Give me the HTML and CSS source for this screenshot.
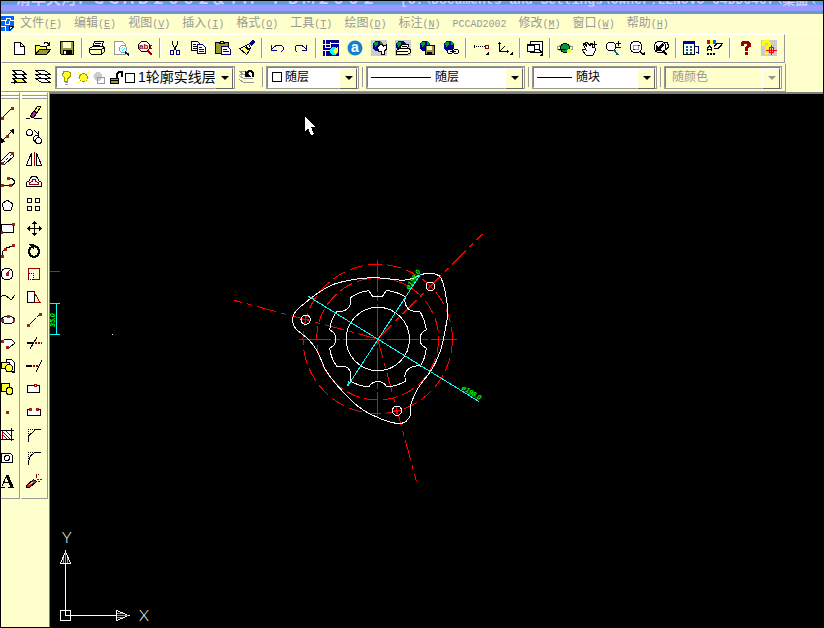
FILE: index.html
```html
<!DOCTYPE html>
<html lang="zh-CN">
<head>
<meta charset="utf-8">
<title>PCCAD2002</title>
<link rel="stylesheet" href="styles.css">
</head>
<body>
<header class="title"><span>清华天河ＰＣＣＡＤ２００２＆ＴＨ－ＰＤＭ２００２</span><span class="path">[C:\Documents and Settings\Owner.LENOVO-64DD6467\桌面\</span></header>
<nav class="menu">
<svg class="i app" viewBox="0 0 16 16"><path class="f-blue" d="M0 0h13v11l-4 4H0z"/><path class="s-white" d="M0 4.500h5v-2h4v2h4M0 10.500h5M4.500 5v4M8.500 5v4M5 8.500h4M4.500 11v4"/><path class="f-white s" d="M8.500 14.500v-4h4z"/></svg>
<a href="#">文件<span>(<u>F</u>)</span></a><a href="#">编辑<span>(<u>E</u>)</span></a><a href="#">视图<span>(<u>V</u>)</span></a><a href="#">插入<span>(<u>I</u>)</span></a><a href="#">格式<span>(<u>O</u>)</span></a><a href="#">工具<span>(<u>T</u>)</span></a><a href="#">绘图<span>(<u>D</u>)</span></a><a href="#">标注<span>(<u>N</u>)</span></a><a href="#"><span>PCCAD2002</span></a><a href="#">修改<span>(<u>M</u>)</span></a><a href="#">窗口<span>(<u>W</u>)</span></a><a href="#">帮助<span>(<u>H</u>)</span></a>
</nav>
<div class="bar standard" role="toolbar" aria-label="标准">
<button aria-label="新建"><svg class="i" viewBox="0 0 16 16"><path class="f-white s" d="M3.500 2.500h6l4 4v8h-10zM9.500 2.500v4h4"/></svg></button>
<button aria-label="打开"><svg class="i" viewBox="0 0 16 16"><path class="f-yellow s" d="M.5 14v-8.500h4l1 1h6v3"/><path class="f-olive s" d="M.5 14.500l4-5h11l-4 5z"/><path class="s" d="M9 3.500l1-1h2l2 2M14.500 2v3h-3"/></svg></button>
<button aria-label="保存"><svg class="i" viewBox="0 0 16 16"><path class="f-olive s" d="M1.500 1.500h13v13h-12l-1-1z"/><path class="f-cream" d="M4 2h8v6H4z"/><path class="f-black" d="M4 10h9v4H4z"/><path class="f-cream" d="M5 11h2v3H5z"/></svg></button>
<i class="sep"></i>
<button aria-label="打印"><svg class="i" viewBox="0 0 16 16"><path class="f-white s" d="M3.500 7.500l2-6h9l-2 6M6 3.500h6M5 5.500h6"/><path class="f-cream s" d="M.5 8.500l3-2h10l2 1v4l-3 3h-10l-2-2zM.5 9.500h12l3-2M12.500 9v5"/><path class="s-yellow" d="M8 12.500h2"/></svg></button>
<button aria-label="打印预览"><svg class="i" viewBox="0 0 16 16"><path class="f-white s-gray" d="M1.500 14.500v-13h8l3 3v10z"/><circle class="f-white s-gray" cx="10" cy="9" r="3.500"/><path class="s-cyan" d="M8 9l2-2M9 11l3-3"/><path class="s-navy thick" d="M12 12l4 3"/></svg></button>
<button aria-label="查找"><svg class="i" viewBox="0 0 16 16"><circle class="f-white s" cx="7" cy="6.500" r="5.500"/><text class="abc" x="2" y="9">ab</text><path class="s-red" d="M15 5h-2v3h2"/><path class="s-red thick" d="M11 11l4 4"/></svg></button>
<i class="sep"></i>
<button aria-label="剪切"><svg class="i" viewBox="0 0 16 16"><path class="s" d="M5.500 1v3l4 7M10.500 1v3l-4 7"/><path class="s-blue" d="M3.500 10.500h3v4h-3zM9.500 10.500h3v4h-3z"/></svg></button>
<button aria-label="复制"><svg class="i" viewBox="0 0 16 16"><path class="f-white s" d="M.5 1.500h6l2 2v7h-8z"/><path class="s" d="M2 4.500h3M2 6.500h4M2 8.500h4"/><path class="f-white s-blue" d="M6.500 4.500h5l3 3v6h-8z"/><path class="s-blue" d="M8 7.500h3M8 9.500h5M8 11.500h5"/></svg></button>
<button aria-label="粘贴"><svg class="i" viewBox="0 0 16 16"><path class="f-olive s" d="M.5 2.500h13v11H.5z"/><path class="f-yellow s" d="M4.500 3.500l1-2h3l1 2z"/><path class="f-white s-blue" d="M6.500 6.500h6l3 3v5h-9z"/><path class="s-blue" d="M8 9.500h4M8 11.500h6"/></svg></button>
<button aria-label="特性匹配"><svg class="i" viewBox="0 0 16 16"><path class="f-cream s" d="M.5 8.500l5-2 5 4-3 4z"/><path class="s-yellow" d="M3 9l4 4M5 8l4 4"/><path class="f-white s" d="M6.500 5.500l3-1 2 3-1 2z"/><path class="s-blue fat" d="M11 5l4-4"/></svg></button>
<i class="sep"></i>
<button aria-label="放弃"><svg class="i" viewBox="0 0 16 16"><path class="s-blue" d="M2.500 5v5h5M3 9l2-2 3-2h4l2 2v3l-2 2"/></svg></button>
<button aria-label="重做"><svg class="i" viewBox="0 0 16 16"><path class="s-blue" d="M13.500 5v5h-5M13 9l-2-2-3-2H4L2 7v3l2 2"/></svg></button>
<i class="sep"></i>
<button aria-label="今日"><svg class="i" viewBox="0 0 16 16"><path class="f-navy" d="M0 0h16v16H0z"/><path class="s-white" d="M0 4.500h7M2.500 0v8M2 7.500h5v-6M7 3.500h9M2.500 10v6M0 10.500h7"/><circle class="f-cyan" cx="11" cy="11" r="4"/><path class="f-yellow" d="M10 10l5-3v4l-3 3z"/></svg></button>
<button aria-label="Autodesk"><svg class="i smooth" viewBox="0 0 16 16"><circle class="f-sky" cx="8" cy="8" r="7.500"/><text class="logo-a" x="4" y="12">a</text></svg></button>
<button aria-label="网上会议"><svg class="i" viewBox="0 0 16 16"><path class="f-silver" d="M0 0h16v16H0z"/><circle class="f-navy" cx="7" cy="6" r="5.500"/><path class="f-green" d="M3 2h4v3L4 7zM9 1l3 3-3 1z"/><path class="f-white s" d="M6.500 7.500l3-3h2l1 2 3-2v5l-2 1v4h-3v-3h-3z"/></svg></button>
<button aria-label="发布"><svg class="i" viewBox="0 0 16 16"><path class="f-silver" d="M0 0h16v16H0z"/><circle class="f-navy" cx="6" cy="5.500" r="5"/><path class="f-green" d="M2 2h4v3L3 7z"/><path class="f-white s" d="M4.500 9.500l2-5h7l-1 5M7 6.500h5"/><path class="f-cream s" d="M1.500 10.500l3-2h9l2 1v3l-3 2h-11zM2 11.500h11"/></svg></button>
<button aria-label="电子传递"><svg class="i" viewBox="0 0 16 16"><circle class="f-navy" cx="6" cy="6" r="5.500"/><path class="f-green" d="M2 2h4v3L3 7zM8 1l3 3-3 1z"/><path class="f-olive s" d="M6.500 5.500h9v9h-9z"/><path class="f-cream" d="M8 6h5v4H8z"/><path class="f-black" d="M8 12h5v3H8z"/></svg></button>
<button aria-label="超级链接"><svg class="i" viewBox="0 0 16 16"><circle class="f-navy" cx="6" cy="6" r="5.500"/><path class="f-green" d="M2 2h4v3L3 7zM8 1l3 3-3 1z"/><path class="f-white s" d="M4.500 10.500l1-1h3l1 1v2l-1 1h-3l-1-1zM10.500 10.500l1-1h3l1 1v2l-1 1h-3l-1-1z"/><path class="s" d="M7 11.500h6"/></svg></button>
<i class="sep"></i>
<button aria-label="临时追踪点"><svg class="i" viewBox="0 0 16 16"><path class="s dots" d="M1 6.500h11"/><path class="s" d="M1.500 5v3"/><path class="s-red" d="M12.500 5.500h3v3h-3z"/><path class="f-black" d="M12 15h4v-4z"/></svg></button>
<button aria-label="用户坐标系"><svg class="i" viewBox="0 0 16 16"><path class="s" d="M2.500 2v9.500h9M3 11l5-5M1 3.500h3M10.500 10v3"/><path class="f-black" d="M12 15h4v-4z"/></svg></button>
<i class="sep"></i>
<button aria-label="鸟瞰"><svg class="i" viewBox="0 0 16 16"><path class="f-white s" d="M3.500 12.500v-11h12v11z"/><path class="f-white s" d="M.5 4.500h7v7h-7zM.5 5.500h7"/><circle class="f-white s" cx="10" cy="7" r="3"/><path class="s" d="M12 9l3 4"/><path class="f-black" d="M12 16h4v-4z"/></svg></button>
<i class="sep"></i>
<button aria-label="三维动态观察"><svg class="i" viewBox="0 0 16 16"><ellipse class="s-gray" cx="8" cy="8" rx="7.500" ry="3"/><circle class="f-green s" cx="8" cy="8" r="4.500"/><path class="s" d="M1 9.500h8"/><circle class="f-yellow" cx="12" cy="11" r="2"/></svg></button>
<button aria-label="实时平移"><svg class="i" viewBox="0 0 16 16"><path class="f-white s" d="M5 15l-4-5 1-1 3 1-3-6 1-1 3 4-2-5h2l3 4 1-3h1v4l3 1v3l-2 4z"/><path class="s" d="M10 4.500h6M13.500 1v6"/></svg></button>
<button aria-label="实时缩放"><svg class="i" viewBox="0 0 16 16"><circle class="f-white s" cx="6" cy="6.500" r="4.500"/><path class="s-teal thick" d="M9 10l4 5"/><path class="s" d="M11 3.500h5M13.500 1v5M11 7.500h5"/></svg></button>
<button aria-label="窗口缩放"><svg class="i" viewBox="0 0 16 16"><circle class="f-white s" cx="7" cy="7" r="6"/><path class="s-gray" d="M4.500 5.500h5v4h-5z"/><path class="s-red" d="M4 9.500h2M9 5.500h2"/><path class="s" d="M11 11l3 4"/><path class="f-black" d="M12 15h4v-4z"/></svg></button>
<button aria-label="缩放上一个"><svg class="i" viewBox="0 0 16 16"><circle class="f-white s" cx="7" cy="7" r="6"/><path class="f-black" d="M3 11V5l2 2 5-4 1 2-4 4 2 2z"/><path class="s thick" d="M10 11l4 4"/><path class="s" d="M12 2.500h2l1 2v3l-2 2"/></svg></button>
<i class="sep"></i>
<button aria-label="特性"><svg class="i" viewBox="0 0 16 16"><path class="f-white s" d="M.5 1.500h11v13H.5z"/><path class="f-navy" d="M0 1h12v3H0z"/><path class="s-teal cols" d="M4 6v8M8 6v8"/><path class="s-blue" d="M12 6.500h3v7M13 12.500h3"/></svg></button>
<button aria-label="设计中心"><svg class="i" viewBox="0 0 16 16"><path class="f-red" d="M0 0h3v4H0z"/><path class="f-yellow" d="M3 0h3v4H3z"/><path class="f-blue" d="M6 0h3v4H6z"/><path class="s" d="M.5 11V8l2-2 2 2v3M1 9.500h4"/><path class="s thick dash" d="M0 14h9"/><path class="f-white s" d="M7 6.500l3-3h6M7 8.500h4l4-4"/></svg></button>
<i class="sep"></i>
<button aria-label="帮助"><svg class="i" viewBox="0 0 16 16"><path class="s-red fat" d="M5 6V3l2-1h3l2 2v2L9 8v3M9 12v3"/></svg></button>
<button aria-label="活动助手"><svg class="i" viewBox="0 0 16 16"><path class="f-silver" d="M0 0h16v16H0z"/><path class="s-yellow fat" d="M2 6V3l2-2h3l1 2v3L5 9v2M5 12v3"/><path class="s-bright" d="M8.500 7.500h4v5h-4zM10.500 5v10M5 10.500h11"/></svg></button>
</div>
<div class="bar properties" role="toolbar" aria-label="对象特性">
<button aria-label="设为当前层"><svg class="i" viewBox="0 0 16 16"><path class="f-yellow s" d="M1.500 9.500h9l5 4h-9z"/><path class="f-white s" d="M1.500 5.500h9l5 4h-9zM1.500 1.500h9l5 4h-9z"/><path class="s" d="M0 13.500h6M3 11v4"/></svg></button>
<button aria-label="图层"><svg class="i" viewBox="0 0 16 16"><path class="f-white s" d="M.5 9.500h9l6 4h-9zM.5 5.500h9l6 4h-9zM.5 1.500h9l6 4h-9z"/></svg></button>
<label class="combo layer"><select aria-label="图层"><option>1轮廓实线层</option></select>
<svg class="state" viewBox="0 0 76 16"><path class="f-yellow s-olive" d="M3.500 8l-2-3 1-3 2-1h2l3 2v3l-3 3v2h-3z"/><path class="s-gray" d="M4 12.500h3M4 14.500h3"/><path class="s-yellow" d="M17 2l11 11M28 2L17 13M22.500 1v13M16 7.500h13"/><circle class="f-yellow s-olive" cx="22.500" cy="7.500" r="4"/><circle class="f-silver" cx="37" cy="6.500" r="4.500"/><path class="s-gray" d="M36.500 7.500h7v6h-7z"/><path class="f-olive s" d="M49.500 8.500h8v5h-8zM50 10.500h8"/><path class="s thick" d="M56 9V4l2-2h3v5"/><path class="f-white s" d="M64.500 3.500h9v9h-9z"/></svg></label>
<button aria-label="上一个图层"><svg class="i" viewBox="0 0 16 16"><path class="s-gray" d="M.5 2.500h7l3 3M.5 5.500h5M.5 6.500l4 3h9M.5 10.500l4 3h10M.5 2.500l4 3"/><path class="s thick" d="M14 8V4l-2-2h-2L8 4"/><path class="f-black" d="M6 2v6h6z"/></svg></button>
<i class="sep"></i>
<label class="combo color"><select aria-label="颜色"><option>随层</option></select><i class="swatch"></i></label>
<i class="sep"></i>
<label class="combo linetype"><select aria-label="线型"><option>随层</option></select><i class="rule"></i></label>
<i class="sep"></i>
<label class="combo weight"><select aria-label="线宽"><option>随块</option></select><i class="rule"></i></label>
<i class="sep"></i>
<label class="combo style"><select aria-label="打印样式" disabled><option>随颜色</option></select></label>
</div>
<main>
<aside class="tools draw" role="toolbar" aria-label="绘图">
<button aria-label="直线"><svg class="i" viewBox="0 0 16 16"><path class="s" d="M3 13L13 3"/><path class="f-red" d="M2 12h3v3H2zM12 2h3v3h-3z"/></svg></button>
<button aria-label="构造线"><svg class="i" viewBox="0 0 16 16"><path class="s" d="M2 14L14 2"/><path class="f-black" d="M15 1v5l-5-4zM2 15v-5l4 4z"/><path class="f-red" d="M7 7h3v3H7z"/></svg></button>
<button aria-label="多线"><svg class="i" viewBox="0 0 16 16"><path class="f-white s" d="M1 11L11 1l4 4L5 14z"/><path class="s dots" d="M4 12l9-9"/><path class="f-red" d="M2 11h3v3H2zM12 1h3v3h-3z"/></svg></button>
<button aria-label="多段线"><svg class="i" viewBox="0 0 16 16"><path class="s" d="M2 11.500h11l2-2v-3l-2-2H9"/><path class="f-red" d="M2 10h3v3H2zM10 10h3v3h-3zM8 3h3v3H8z"/></svg></button>
<button aria-label="正多边形"><svg class="i" viewBox="0 0 16 16"><path class="f-white s" d="M3 7l5-4 6 4-2 6H5z"/></svg></button>
<button aria-label="矩形"><svg class="i" viewBox="0 0 16 16"><path class="f-white s" d="M2.500 4.500h12v8h-12z"/><path class="f-red" d="M13 3h3v3h-3zM1 11h3v3H1z"/></svg></button>
<button aria-label="圆弧"><svg class="i" viewBox="0 0 16 16"><path class="s" d="M3 14V9l4-4 7-2"/><path class="f-red" d="M2 12h3v3H2zM5 5h3v3H5zM13 1h3v3h-3z"/></svg></button>
<button aria-label="圆"><svg class="i" viewBox="0 0 16 16"><circle class="f-white s" cx="8" cy="8" r="6"/><path class="s-red" d="M8 8l3-4"/><path class="f-red" d="M7 7h3v3H7z"/></svg></button>
<button aria-label="样条曲线"><svg class="i" viewBox="0 0 16 16"><path class="s" d="M1 9l3-3h2l5 4h2l3-4"/></svg></button>
<button aria-label="椭圆"><svg class="i" viewBox="0 0 16 16"><ellipse class="f-white s" cx="9" cy="8" rx="6.500" ry="4"/><path class="f-red" d="M8 3h3v3H8zM2 7h3v3H2zM14 7h2v3h-2z"/></svg></button>
<button aria-label="椭圆弧"><svg class="i" viewBox="0 0 16 16"><path class="f-white s" d="M3 6l4-2h5l3 3v2l-4 3H8"/><path class="f-red" d="M2 5h3v3H2zM7 11h3v3H7z"/></svg></button>
<button aria-label="插入块"><svg class="i" viewBox="0 0 16 16"><path class="f-white s" d="M7.500 1.500h5l3 3v9h-8z"/><path class="f-yellow s" d="M2.500 4.500h8v6h-8z"/><circle class="f-yellow s" cx="10" cy="10" r="3.500"/><path class="f-black" d="M12 15h4v-4z"/></svg></button>
<button aria-label="创建块"><svg class="i" viewBox="0 0 16 16"><path class="f-yellow s" d="M2.500 2.500h8v8h-8z"/><circle class="f-yellow s" cx="10.500" cy="10" r="3.500"/></svg></button>
<button aria-label="点"><svg class="i" viewBox="0 0 16 16"><path class="f-red" d="M7 7h3v3H7z"/></svg></button>
<button aria-label="图案填充"><svg class="i" viewBox="0 0 16 16"><path class="f-white s-red" d="M3.500 3.500h9v9h-9zM3 7l5 5M3 4l9 9M7 4l5 5"/><path class="s" d="M1 3.500h14M12.500 1v13M1 12.500h14"/></svg></button>
<button aria-label="面域"><svg class="i" viewBox="0 0 16 16"><path class="f-white s" d="M2.500 3.500h9l2 2v7h-11z"/><circle class="f-white s" cx="8" cy="8" r="2.500"/></svg></button>
<button aria-label="多行文字"><svg class="i" viewBox="0 0 16 16"><path class="s" d="M3 13L8 2M2 14.500h4M9 14.500h6M5 9.500h6"/><path class="s fat" d="M8 2l5 12"/></svg></button>
</aside>
<aside class="tools modify" role="toolbar" aria-label="修改">
<button aria-label="删除"><svg class="i" viewBox="0 0 16 16"><path class="f-purple s" d="M4 11l4-5 3 2-4 5z"/><path class="f-yellow s" d="M8 6l4-5h3l-4 7z"/><path class="s" d="M0 13.500h4M8 13.500h8"/></svg></button>
<button aria-label="复制对象"><svg class="i" viewBox="0 0 16 16"><circle class="f-white s" cx="3.500" cy="4.500" r="3"/><circle class="f-white s" cx="10.500" cy="10.500" r="3"/><circle class="f-white s" cx="12.500" cy="12.500" r="3"/><path class="s" d="M8 2l4 4M12.500 3v4h-4"/></svg></button>
<button aria-label="镜像"><svg class="i" viewBox="0 0 16 16"><path class="f-white s" d="M5.500 2v12h-5zM10.500 2v12h5z"/><path class="s-red" d="M8.500 1v14"/></svg></button>
<button aria-label="偏移"><svg class="i" viewBox="0 0 16 16"><path class="f-white s" d="M.5 12.500v-4l3-2 1-3 2-1h3l2 1 1 3 3 2v4z"/><path class="s-red" d="M3.500 10.500v-2l3-1v-2h3v2l3 1v2z"/></svg></button>
<button aria-label="阵列"><svg class="i" viewBox="0 0 16 16"><path class="f-white s" d="M1.500 1.500h4v4h-4zM9.500 1.500h4v4h-4zM1.500 9.500h4v4h-4zM9.500 9.500h4v4h-4z"/></svg></button>
<button aria-label="移动"><svg class="i" viewBox="0 0 16 16"><path class="s" d="M8.500 2v12M2 8.500h12"/><path class="f-black" d="M6 4l2-3h1l2 3zM6 13l2 3h1l2-3zM4 6L1 8v1l3 2zM13 6l3 2v1l-3 2z"/></svg></button>
<button aria-label="旋转"><svg class="i" viewBox="0 0 16 16"><path class="s thick" d="M5 4L3 7v3l2 3 3 1 3-1 2-3V7l-2-3-3-1"/><path class="f-black" d="M3 1h5v6z"/></svg></button>
<button aria-label="缩放"><svg class="i" viewBox="0 0 16 16"><path class="f-cream s-red" d="M2.500 2.500h11v11h-11z"/><path class="f-white s dots" d="M2.500 7.500h5v6h-5z"/></svg></button>
<button aria-label="拉伸"><svg class="i" viewBox="0 0 16 16"><path class="f-white s" d="M1.500 13.500v-11h7v11z"/><path class="s-red" d="M8 3l6 10.500H8"/></svg></button>
<button aria-label="拉长"><svg class="i" viewBox="0 0 16 16"><path class="s" d="M2 14l6-6"/><path class="s dots" d="M8 8l5-5"/><path class="f-red" d="M1 12h3v3H1zM13 1h3v3h-3z"/></svg></button>
<button aria-label="修剪"><svg class="i" viewBox="0 0 16 16"><path class="s" d="M4 14l7-12"/><path class="s thick" d="M1 8h7"/><path class="s-red thick dash" d="M9 8h7"/></svg></button>
<button aria-label="延伸"><svg class="i" viewBox="0 0 16 16"><path class="s" d="M10 14l6-12"/><path class="s thick" d="M0 8h6"/><path class="s-red thick dash" d="M7 8h6"/></svg></button>
<button aria-label="打断于点"><svg class="i" viewBox="0 0 16 16"><path class="f-white s" d="M1.500 4.500h12v7h-12z"/><path class="f-white s-red" d="M8.500 3.500h2v2h-2z"/></svg></button>
<button aria-label="打断"><svg class="i" viewBox="0 0 16 16"><path class="f-white" d="M1 5h14v7H1z"/><path class="s" d="M4 5.500H1.500v6h13v-6H12"/><path class="f-red" d="M3 4h3v3H3zM10 4h3v3h-3z"/></svg></button>
<button aria-label="倒角"><svg class="i" viewBox="0 0 16 16"><path class="s" d="M2.500 15V9l7-6.500H15"/><path class="s dots" d="M2.500 9V2.500h7"/></svg></button>
<button aria-label="圆角"><svg class="i" viewBox="0 0 16 16"><path class="s" d="M2.500 15v-4l2-5 4-3.500H15"/><path class="s dots" d="M2.500 9V2.500h7"/></svg></button>
<button aria-label="分解"><svg class="i" viewBox="0 0 16 16"><path class="f-crimson s" d="M.5 12.500l7-6 3 2-7 6h-3z"/><path class="s-silver" d="M3 12l4-3"/><path class="s-red dash" d="M10 5l3-4M11 6h5M10 3V0M12 8l3 2"/></svg></button>
</aside>
<section class="canvas" aria-label="绘图区">
<svg class="drawing">
<g transform="translate(-50 -94)">
<g class="cyan"><path d="M50 303.500h10M50 334.500h10M56.500 303v31"/></g>
<path class="center" d="M50 271.500h10"/>
<path class="f-white" d="M112 334h1v1h-1z"/>
<g transform="translate(220 220) scale(.33333)">
<g class="center">
<circle class="dashed" cx="473" cy="357" r="224"/><circle class="dashed" cx="473" cy="357" r="183"/>
<path class="dashdot" d="M473 357L42 241M473 357L788 42M473 357L589 783"/>
<path class="axis" d="M237 358.500h474M472.500 120v472"/>
<path d="M247 299h20M257 289v20M622 190l18 18M640 190l-18 18M522 572h20M531 562v20"/>
</g>
<g class="object">
<circle cx="473.500" cy="357" r="95"/><circle cx="257" cy="299" r="14"/><circle cx="631" cy="199" r="13"/><circle cx="531" cy="572" r="14"/>
<path d="M446 212l12 17h29l13-18Q530 215 556 230Q550 252 566 268Q575 275 600 275Q615 300 619 330Q600 337 600 357Q600 377 619 384Q616 415 601 438Q572 435 558 455Q552 463 557 484Q530 498 501 501Q492 485 473 485Q455 485 446 501Q418 498 391 484Q396 455 384 444Q374 437 350 439Q332 412 329 384Q347 377 347 357Q347 337 329 330Q332 300 350 275Q376 276 386 262Q394 252 391 233Q415 216 446 212z"/>
<path d="M218 298Q218 278 245 257Q300 210 340 193Q400 173 472 173L545 181Q575 180 601 165Q630 153 658 167Q670 180 678 230Q685 270 683 290L670 360Q658 415 630 457L600 495Q578 530 571 560V585Q563 608 540 611Q512 610 472 592Q430 575 400 547Q345 495 315 447L296 402Q283 375 260 353L232 331Q218 318 218 298z"/>
</g>
<g class="cyan"><path d="M265 229L776 544M601 163L383 498M265 229l16 6M383 498l3-14"/></g>
</g>
<text class="dim" transform="translate(461 389) rotate(31)">ø198.0</text>
<text class="dim" transform="translate(409 290) rotate(-57)">ø158.0</text>
<text class="dim" transform="translate(55 327) rotate(-90)">35.0</text>
<g class="object"><path d="M60.500 610.500h10v10h-10zM65.500 615.500v-52M65.500 615.500h51M60.500 563.500h10l-5-12zM116.500 610.500v10l12-5z"/></g>
<path class="s-gray" d="M65.500 553v10M63.500 558v5M67.500 558v5M117 613.500h6M117 615.500h11M117 617.500h6"/>
<text class="ucs" x="62" y="543">Y</text><text class="ucs" x="139" y="621">X</text>
<path class="f-white" d="M305 116v15l3-3 3 7 3-1-3-7h4z"/>
</g>
</svg>
</section>
</main>
</body>
</html>
```
FILE: styles.css
```css
* { box-sizing: border-box; }
html, body { height: 100%; }
body {
  margin: 0;
  border: 1px solid #000;
  display: flex;
  flex-direction: column;
  overflow: hidden;
  background: #ffffcc;
  font: 12px/16px "Liberation Sans", "Noto Sans CJK SC", sans-serif;
}
.title {
  height: 13px;
  flex: none;
  display: flex;
  align-items: flex-end;
  gap: 24px;
  padding: 0 0 5px 15px;
  overflow: hidden;
  white-space: nowrap;
  color: #ccccff;
  background: linear-gradient(#6699cc 3px, #6699ff 3px 4px, #9999ff 4px 10px, #6699cc 10px);
  font: bold 15px/16px "Liberation Mono", "Noto Sans CJK SC", monospace;
}
.title .path { font-size: 13px; }
.menu {
  height: 20px;
  flex: none;
  display: flex;
  align-items: center;
  gap: 12px;
  border-bottom: 1px solid #fff;
  white-space: nowrap;
}
.menu .app { margin-right: -9px; }
.menu a { color: #999; text-decoration: none; }
.menu span { font: 10px/16px "Liberation Mono", monospace; }
.bar {
  height: 29px;
  flex: none;
  align-self: flex-start;
  display: flex;
  align-items: flex-start;
  padding: 1px 3px 0 5px;
  border: 1px solid;
  border-color: #fff #999 #999 #fff;
}
button {
  display: flex;
  align-items: center;
  justify-content: center;
  padding: 0;
  border: 0;
  background: none;
}
.bar button { width: 24px; height: 24px; }
.sep {
  width: 2px;
  height: 20px;
  margin: 2px 2px 0;
  background: linear-gradient(90deg, #999 1px, #fff 1px);
}
.properties .sep { margin: 2px 2px 0 3px; }
.i { width: 16px; height: 16px; flex: none; }
svg { shape-rendering: crispEdges; fill: none; }
.smooth { shape-rendering: auto; }
.combo {
  position: relative;
  height: 23px;
  margin-top: 1px;
  border: 2px solid;
  border-color: #808080 #fff #fff #808080;
  outline: 1px solid #999;
  outline-offset: -1px;
  background: #fff;
}
.combo select {
  appearance: none;
  width: 100%;
  height: 19px;
  padding: 0 16px 0 0;
  border: 0;
  background: none;
  color: #000;
  opacity: 1;
  font: 12px/19px "Liberation Sans", "Noto Sans CJK SC", sans-serif;
}
.combo::before {
  content: "";
  position: absolute;
  right: 0;
  top: 0;
  width: 16px;
  height: 19px;
  background: #ffffcc;
  border: 1px solid;
  border-color: #fff #666 #666 #fff;
}
.combo::after {
  content: "";
  position: absolute;
  right: 4px;
  top: 8px;
  border: 4px solid transparent;
  border-top-color: #000;
  border-bottom: 0;
}
.layer { width: 180px; }
.layer select { padding-left: 81px; font-size: 14px; }
.state { position: absolute; left: 4px; top: 2px; width: 76px; height: 16px; pointer-events: none; }
.color { width: 93px; }
.color select { padding-left: 17px; }
.swatch { position: absolute; left: 4px; top: 4px; width: 10px; height: 10px; border: 1px solid #000; }
.linetype { width: 159px; }
.linetype select { padding-left: 67px; }
.rule { position: absolute; left: 3px; top: 9px; width: 60px; height: 1px; background: #000; }
.weight { width: 125px; }
.weight select { padding-left: 42px; }
.weight .rule { width: 35px; }
.style { width: 118px; background: #ffffcc; }
.style select { padding-left: 6px; color: #999; }
.style::after { border-top-color: #999; }
main { flex: 1; display: flex; min-height: 0; }
.tools {
  align-self: flex-start;
  padding: 9px 0 5px;
  border: 1px solid;
  border-color: #fff #999 #999 #fff;
  background: linear-gradient(#fff 1px, #ffffcc 1px 2px, #999 2px 3px, #fff 3px 4px, #ffffcc 4px 5px, #999 5px 6px, #ffffcc 6px) no-repeat;
}
.tools button { width: 100%; height: 23px; padding-bottom: 1px; }
.draw { width: 19px; border-left: 0; overflow: hidden; }
.draw button { justify-content: flex-start; }
.draw .i { margin-left: -2px; }
.modify { width: 27px; margin-left: 1px; padding-right: 1px; }
.canvas {
  flex: 1;
  min-width: 0;
  margin-left: 1px;
  border-left: 1px solid #808080;
  border-top: 2px solid #808080;
  background: #000;
}
.drawing { display: block; width: 100%; height: 100%; }
.s { stroke: #000; }
.s-white { stroke: #fff; }
.s-gray { stroke: #999; }
.s-silver { stroke: #ccc; }
.s-red { stroke: #990000; }
.s-bright { stroke: #ff0000; }
.s-blue, .s-navy { stroke: #000080; }
.s-yellow { stroke: #ffff00; }
.s-olive { stroke: #999900; }
.s-cyan { stroke: #00ffff; }
.s-teal { stroke: #006666; }
.f-white { fill: #fff; }
.f-black { fill: #000; }
.f-cream { fill: #ffffcc; }
.f-silver { fill: #ccc; }
.f-red { fill: #a02020; }
.f-crimson { fill: #e02020; }
.f-yellow { fill: #ffff33; }
.f-olive { fill: #999933; }
.f-green { fill: #009933; }
.f-blue { fill: #0066ff; }
.f-navy { fill: #000099; }
.f-sky { fill: #1680d0; }
.f-cyan { fill: #00ffff; }
.f-purple { fill: #993399; }
.thick { stroke-width: 2; }
.fat { stroke-width: 3; }
.dots { stroke-dasharray: 1 1; }
.dash { stroke-dasharray: 2 1; }
.cols { stroke-width: 2; stroke-dasharray: 2 1; }
.abc { fill: #990000; font: bold 8px "Liberation Sans", sans-serif; }
.logo-a { fill: #fff; font: bold 14px "Liberation Sans", sans-serif; }
.drawing path, .drawing circle { vector-effect: non-scaling-stroke; }
.center { stroke: #ff0000; }
.dashed { stroke-dasharray: 14 5; }
.dashdot { stroke-dasharray: 20 5 5 5; }
.axis { stroke-dasharray: 32 3 6 3; }
.object { stroke: #fff; }
.cyan { stroke: #00ffff; }
.dim { fill: #00ff00; font: italic bold 7px "Liberation Sans", sans-serif; }
.ucs { fill: #fff; font: 300 16px Lato, "Liberation Sans", sans-serif; }
```
